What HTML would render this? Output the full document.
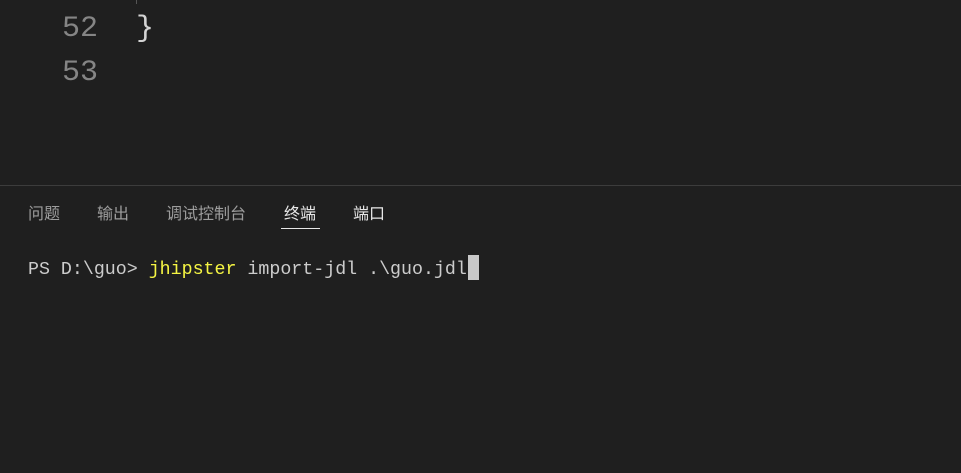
<!DOCTYPE html>
<html><head><meta charset="utf-8"><style>
body{margin:0;width:961px;height:473px;background:#1f1f1f;overflow:hidden;position:relative;font-family:"Liberation Sans","Noto Sans CJK SC",sans-serif}
.ln{position:absolute;left:62px;color:#858585;font:30px "Liberation Mono","DejaVu Sans Mono",monospace;line-height:44px}
.br{position:absolute;left:136px;top:7px;color:#d4d4d4;font:30px "Liberation Mono",monospace;line-height:44px}
.tick{position:absolute;left:136px;top:0;width:1px;height:4px;background:#555}
.sep{position:absolute;left:0;top:185px;width:961px;height:1px;background:#3c3c3c}
.tab{position:absolute;top:205px;font-size:16px;line-height:20px;color:#9d9d9d}
.act{color:#e7e7e7}
.ul{position:absolute;left:281px;top:228px;width:39px;height:1px;background:#e7e7e7}
.term{position:absolute;left:28px;top:258px;font:18.3px "Liberation Mono","DejaVu Sans Mono",monospace;color:#cccccc;white-space:pre;line-height:24px}
.y{color:#f5f543}
.cur{position:absolute;left:468px;top:255px;width:11px;height:25px;background:#c8c8c8}
</style></head><body>
<div class="tick"></div>
<div class="ln" style="top:7px">52</div>
<div class="ln" style="top:51px">53</div>
<div class="br">}</div>
<div class="sep"></div>
<div class="tab" style="left:28px">问题</div>
<div class="tab" style="left:97px">输出</div>
<div class="tab" style="left:166px">调试控制台</div>
<div class="tab act" style="left:284px">终端</div>
<div class="tab act" style="left:353px">端口</div>
<div class="ul"></div>
<div class="term">PS D:\guo&gt; <span class="y">jhipster</span> import-jdl .\guo.jdl</div>
<div class="cur"></div>
</body></html>
